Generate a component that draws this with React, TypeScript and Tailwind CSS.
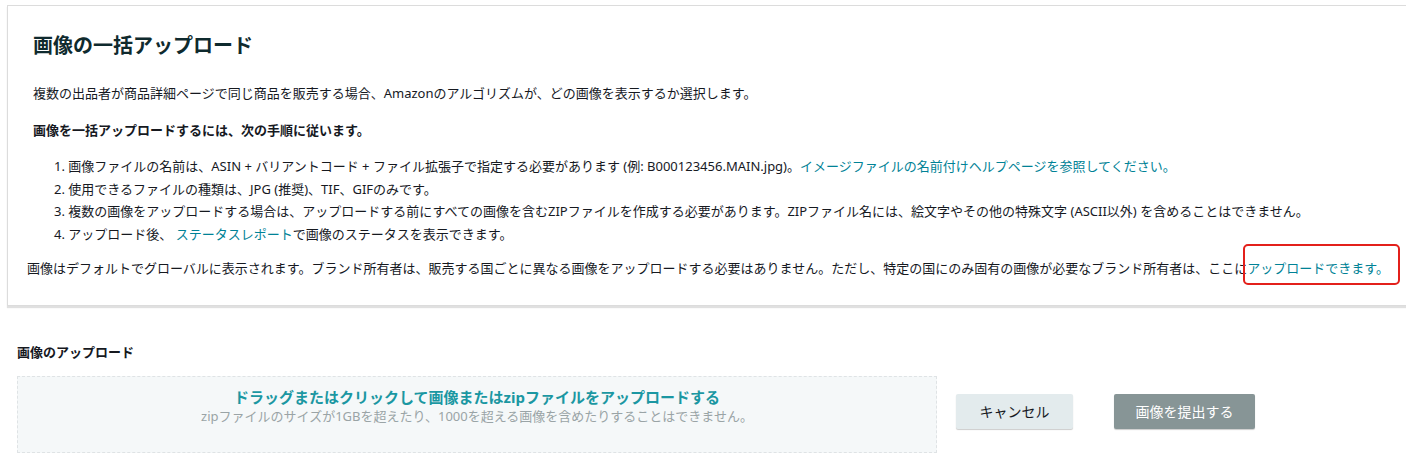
import React from 'react';

const font = { fontFamily: '"Noto Sans", "Noto Sans CJK JP", sans-serif' };

const App: React.FC = () => {
  return (
    <div className="w-[1406px] h-[468px] bg-white overflow-hidden text-[13px] text-[#16191f]" style={font}>
      {/* 説明カード */}
      <div className="ml-[7px] mt-[5px] w-[1420px] h-[301px] bg-white border border-[#dcdcdc] shadow-[0_2px_1px_rgba(0,0,0,0.12)]">
        <div className="pl-[25px] pt-[24px]">
          <h1 className="text-[20px] leading-[32px] font-bold text-[#0f2a2e]">画像の一括アップロード</h1>
          <p className="mt-[21px] leading-[20px]">
            複数の出品者が商品詳細ページで同じ商品を販売する場合、Amazonのアルゴリズムが、どの画像を表示するか選択します。
          </p>
          <p className="mt-[17px] leading-[20px] font-bold">画像を一括アップロードするには、次の手順に従います。</p>
          <ol className="mt-[15px] pl-[21px] leading-[22.5px]">
            <li>
              1. 画像ファイルの名前は、ASIN + バリアントコード + ファイル拡張子で指定する必要があります (例: B000123456.MAIN.jpg)。
              <span className="text-[#008296]">イメージファイルの名前付けヘルプページを参照してください。</span>
            </li>
            <li>2. 使用できるファイルの種類は、JPG (推奨)、TIF、GIFのみです。</li>
            <li>
              3. 複数の画像をアップロードする場合は、アップロードする前にすべての画像を含むZIPファイルを作成する必要があります。ZIPファイル名には、絵文字やその他の特殊文字 (ASCII以外) を含めることはできません。
            </li>
            <li>
              4. アップロード後、 <span className="text-[#008296]">ステータスレポート</span>で画像のステータスを表示できます。
            </li>
          </ol>
          <p className="mt-[13px] -ml-[6px] leading-[20px] whitespace-nowrap">
            画像はデフォルトでグローバルに表示されます。ブランド所有者は、販売する国ごとに異なる画像をアップロードする必要はありません。ただし、特定の国にのみ固有の画像が必要なブランド所有者は、ここに
            <span className="relative text-[#008296]">
              アップロードできます。
              <span className="absolute left-[-4px] right-[-11px] top-[-15px] bottom-[-8px] border-2 border-[#e3201b] rounded-[5px]" />
            </span>
          </p>
        </div>
      </div>

      {/* アップロード */}
      <div className="pl-[17px] pt-[36px]">
        <div className="font-bold text-[13px] leading-[20px]">画像のアップロード</div>
        <div className="mt-[14px] flex items-start">
          <div className="w-[920px] h-[77px] bg-[#f5f8f9] border border-dashed border-[#dfe3e5] flex flex-col items-center pt-[10px]">
            <div className="text-[15px] leading-[20px] font-bold text-[#1b97a2]">
              ドラッグまたはクリックして画像またはzipファイルをアップロードする
            </div>
            <div className="text-[13px] leading-[18px] text-[#9aa4a6]">
              zipファイルのサイズが1GBを超えたり、1000を超える画像を含めたりすることはできません。
            </div>
          </div>
          <button className="ml-[19px] mt-[18px] w-[117px] h-[35px] rounded-[2px] bg-[#e3ebed] shadow-[0_1px_1px_rgba(0,0,0,0.2)] text-[14px] text-[#16191f]">
            キャンセル
          </button>
          <button className="ml-[41px] mt-[18px] w-[141px] h-[35px] rounded-[2px] bg-[#879596] shadow-[0_1px_1px_rgba(0,0,0,0.2)] text-[14px] text-white">
            画像を提出する
          </button>
        </div>
      </div>
    </div>
  );
};

export default App;
